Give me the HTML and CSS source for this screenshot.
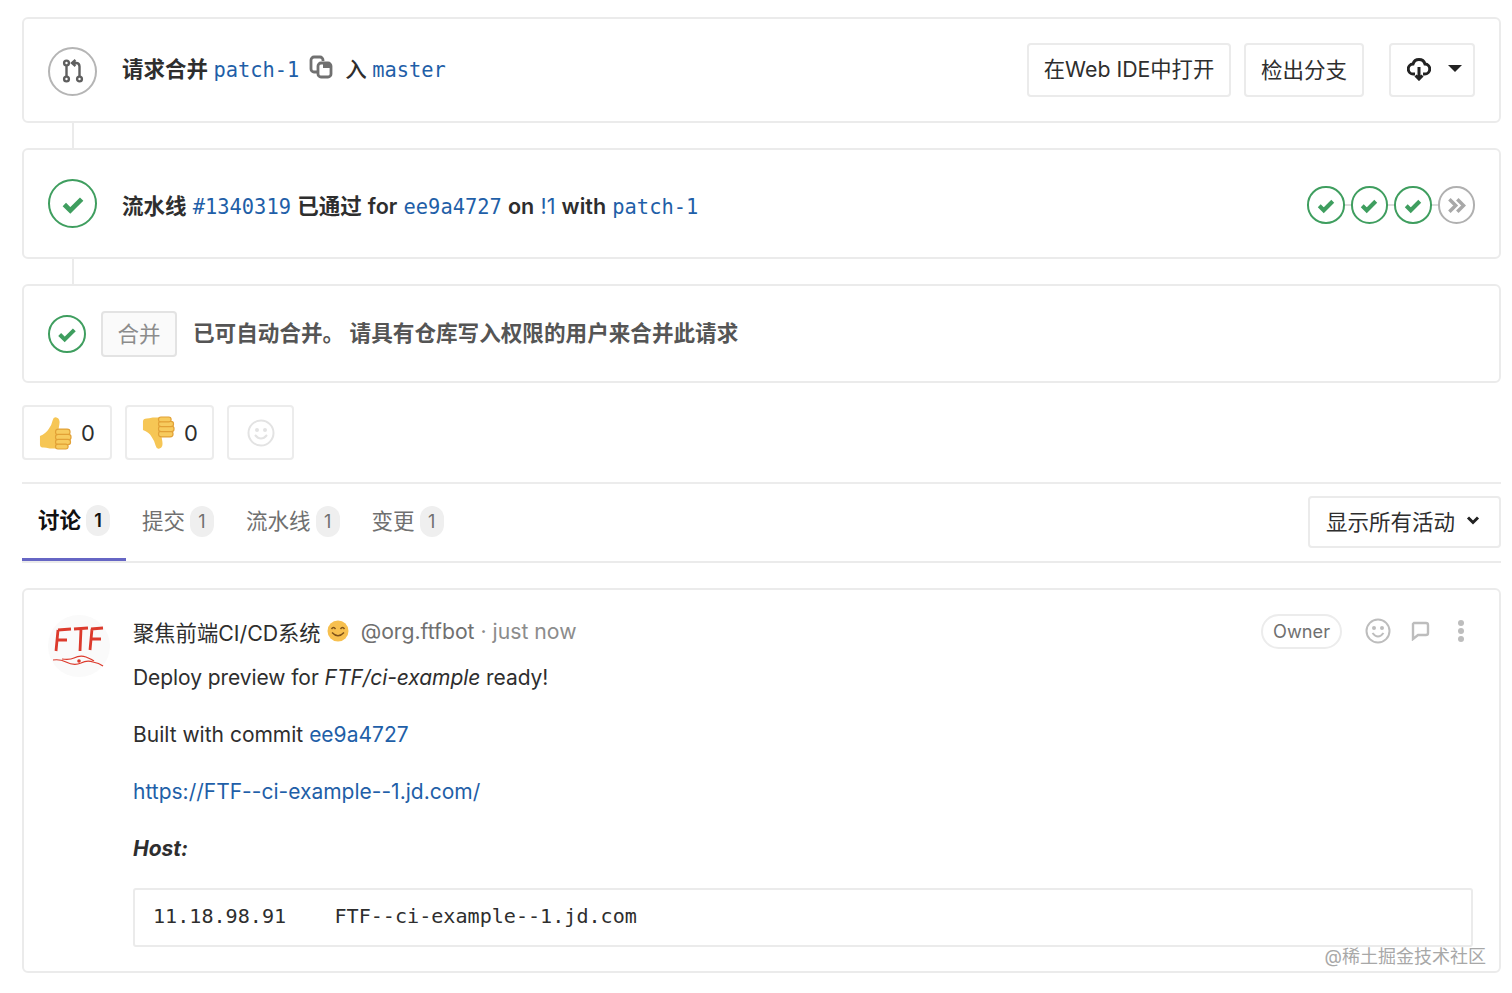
FILE: index.html
```html
<!DOCTYPE html>
<html>
<head>
    <meta charset="UTF-8">
    <title>合并请求</title>
    <link rel="stylesheet" href="styles.css">
</head>
<body>
    <svg class="defs" width="0" height="0">
        <symbol id="thumb" viewBox="0 0 34 34">
            <path d="M1 20q6-2 9-7 3-4 4-9 1-4 4-3 4 1 3 7l-1 6v19H11q-4-1-6-1-4 0-4-3z" fill="#f6c655"/>
            <g fill="#f7cb5e" stroke="#e2a136" stroke-width="1.200">
                <rect x="17" y="13" width="15" height="6" rx="3"/>
                <rect x="17" y="18.500" width="16" height="5.500" rx="2.700"/>
                <rect x="17" y="23.500" width="15.500" height="5.500" rx="2.700"/>
                <rect x="17" y="28.500" width="13" height="5" rx="2.500"/>
            </g>
        </symbol>
    </svg>
    <section class="card card-branch">
        <span class="status status-grey">
            <svg width="24" height="24" viewBox="0 0 24 24" fill="none" stroke="#5f5f5f" stroke-width="2.400">
                <circle cx="5.500" cy="20" r="2.400"/><circle cx="18.500" cy="20" r="2.400"/><circle cx="5.500" cy="4" r="2.400"/>
                <path d="M5.500 6.500v11M18.500 17.500V7.500q0-3.500-3.500-3.500h-3"/><path d="M14.500 1l-3.500 3 3.500 3"/>
            </svg>
        </span>
        <p class="title title-branch">请求合并 <a class="mono">patch-1</a>
            <svg class="copy" width="24" height="24" viewBox="0 0 24 24" fill="none" stroke="#707070" stroke-width="2.800">
                <path d="M8 17H5a3 3 0 0 1-3-3V5a3 3 0 0 1 3-3h6a3 3 0 0 1 3 3v1"/>
                <rect x="9" y="8" width="13" height="14" rx="3"/><rect x="14" y="9" width="7" height="4" fill="#707070" stroke="none"/>
            </svg>
            <span class="into">入</span> <a class="mono">master</a></p>
        <div class="actions">
            <span class="btn btn-ide">在Web IDE中打开</span>
            <span class="btn btn-checkout">检出分支</span>
            <span class="btn btn-download">
                <svg width="24" height="24" viewBox="0 0 24 24" fill="none" stroke="#222" stroke-width="3">
                    <path d="M8 17H6.500a5 5 0 0 1-.5-10 6.300 6.300 0 0 1 12 0 5 5 0 0 1-.5 10H16"/>
                    <path d="M12 10v12M8.500 18.500l3.500 3.500 3.500-3.500"/>
                </svg>
                <i class="caret"></i>
            </span>
        </div>
    </section>
    <div class="link-line"></div>
    <section class="card card-pipeline">
        <span class="status status-green">
            <svg width="26" height="26" viewBox="0 0 24 24" fill="none" stroke="#3f9e5f" stroke-width="4.400"><path d="M4 12.500l5.500 5.500L20 7.500"/></svg>
        </span>
        <p class="title title-pipeline">流水线 <a class="mono">#1340319</a> 已通过 for <a class="mono">ee9a4727</a> on <a class="plain">!1</a> with <a class="mono">patch-1</a></p>
        <div class="stages">
            <span class="stage"><svg width="18" height="18" viewBox="0 0 24 24" fill="none" stroke="#3f9e5f" stroke-width="5.500"><path d="M3 13l6 6L21 7"/></svg></span>
            <span class="stage-line"></span>
            <span class="stage"><svg width="18" height="18" viewBox="0 0 24 24" fill="none" stroke="#3f9e5f" stroke-width="5.500"><path d="M3 13l6 6L21 7"/></svg></span>
            <span class="stage-line"></span>
            <span class="stage"><svg width="18" height="18" viewBox="0 0 24 24" fill="none" stroke="#3f9e5f" stroke-width="5.500"><path d="M3 13l6 6L21 7"/></svg></span>
            <span class="stage-line"></span>
            <span class="stage stage-skip"><svg width="19" height="19" viewBox="0 0 24 24" fill="none" stroke="#a8a8a8" stroke-width="4.400"><path d="M3 4l8 8-8 8M13 4l8 8-8 8"/></svg></span>
        </div>
    </section>
    <div class="link-line"></div>
    <section class="card card-merge">
        <span class="status status-green status-small">
            <svg width="22" height="22" viewBox="0 0 24 24" fill="none" stroke="#3f9e5f" stroke-width="4.400"><path d="M4 12.500l5.500 5.500L20 7.500"/></svg>
        </span>
        <span class="btn-merge">合并</span>
        <p class="merge-text">已可自动合并。 请具有仓库写入权限的用户来合并此请求</p>
    </section>

    <div class="awards">
        <span class="award award-up">
            <svg width="33" height="34"><use href="#thumb"/></svg>
            0
        </span>
        <span class="award award-down">
            <svg class="flip" width="33" height="34"><use href="#thumb"/></svg>
            0
        </span>
        <span class="award award-empty">
            <svg width="28" height="28" viewBox="0 0 28 28" fill="none" stroke="#e3e3e3" stroke-width="2">
                <circle cx="14" cy="14" r="12.500"/><path d="M8 16q6 7 12 0"/><circle cx="10" cy="11" r="1" fill="#e3e3e3"/><circle cx="18" cy="11" r="1" fill="#e3e3e3"/>
            </svg>
        </span>
    </div>

    <nav class="tabs">
        <ul class="tab-list">
            <li class="tab tab-active"><span class="tab-label">讨论</span> <span class="badge">1</span></li>
            <li class="tab"><span class="tab-label">提交</span> <span class="badge">1</span></li>
            <li class="tab"><span class="tab-label">流水线</span> <span class="badge">1</span></li>
            <li class="tab"><span class="tab-label">变更</span> <span class="badge">1</span></li>
        </ul>
        <span class="btn btn-filter">显示所有活动
            <svg width="14" height="14" viewBox="0 0 14 14" fill="none" stroke="#222" stroke-width="3"><path d="M2 4.500l5 5 5-5"/></svg>
        </span>
    </nav>

    <article class="card note">
        <svg class="avatar" width="62" height="62" viewBox="0 0 62 62">
            <circle cx="31" cy="31" r="31" fill="#fafafa"/>
            <g fill="none" stroke="#dc3a2c" stroke-width="2.800">
                <path d="M10 15l13-1M10 15l-2 21M9 25h10"/>
                <path d="M26 14l14-1M33 14l-1 22"/>
                <path d="M43 14l12-1M44 14l-2 21M43 24h10"/>
            </g>
            <g fill="none" stroke="#dc3a2c" stroke-width="1.200">
                <path d="M5 45q7-1 13 2 8 4 15 1 6-3 12-1 6 1 10 4"/>
                <path d="M14 44q8 1 12-1 6-3 12-1 5 2 8 4"/>
            </g>
            <circle cx="31" cy="46" r="1.800" fill="#dc3a2c"/>
        </svg>
        <div class="note-body">
            <header class="note-head">
                <span class="author">聚焦前端CI/CD系统</span>
                <svg class="smile" width="22" height="22" viewBox="0 0 22 22">
                    <circle cx="11" cy="11" r="10.500" fill="#f7c04f"/>
                    <path d="M4.500 9q2-3 4 0M13.500 9q2-3 4 0M5 12.500q6 6.500 12 0" fill="none" stroke="#7d5119" stroke-width="1.400"/>
                </svg>
                <span class="handle">@org.ftfbot</span>
                <span class="time">· just now</span>
                <div class="note-actions">
                    <span class="role">Owner</span>
                    <svg class="act-smile" width="26" height="26" viewBox="0 0 26 26" fill="none" stroke="#bdbdbd" stroke-width="2">
                        <circle cx="13" cy="13" r="11.500"/><path d="M7.500 15q5.500 7 11 0"/><circle cx="9" cy="10" r="1" fill="#bdbdbd"/><circle cx="17" cy="10" r="1" fill="#bdbdbd"/>
                    </svg>
                    <svg class="act-comment" width="20" height="20" viewBox="0 0 20 20" fill="none" stroke="#bdbdbd" stroke-width="2.400"><path d="M4 2h12q2 0 2 2v8q0 2-2 2H8l-5 4V3z"/></svg>
                    <span class="dots"><i></i><i></i><i></i></span>
                </div>
            </header>
            <p class="note-line note-first">Deploy preview for <em>FTF/ci-example</em> ready!</p>
            <p class="note-line">Built with commit <a>ee9a4727</a></p>
            <p class="note-line"><a>https://FTF--ci-example--1.jd.com/</a></p>
            <p class="note-line"><strong><em>Host:</em></strong></p>
            <pre class="code">11.18.98.91    FTF--ci-example--1.jd.com</pre>
        </div>
        <span class="watermark">@稀土掘金技术社区</span>
    </article>
</body>
</html>
```

FILE: styles.css
```css
*{
    margin: 0;
    padding: 0;
    box-sizing: border-box;
}
ul,li{
    list-style: none;
}
body{
    padding: 17px 11px 0 22px;
    height: 993px;
    overflow: hidden;
    background: #fff;
    color: #2e2e2e;
    font-family: Inter, "Noto Sans CJK SC", sans-serif;
    font-size: 21.5px;
}
a{
    color: #1f5fa8;
    text-decoration: none;
}
.defs{
    position: absolute;
}
.mono{
    font-family: "DejaVu Sans Mono", "Noto Sans CJK SC", monospace;
    font-size: 20.4px;
    font-weight: 400;
}
.plain{
    font-weight: 400;
}
.card{
    border: 2px solid #ebebeb;
    border-radius: 6px;
    background: #fff;
}
.card-branch,.card-pipeline{
    display: flex;
    align-items: center;
    padding-left: 24px;
    padding-right: 24px;
}
.card-branch{
    height: 106px;
}
.card-pipeline{
    height: 111px;
}
.link-line{
    width: 2px;
    height: 25px;
    margin-left: 50px;
    background: #ebebeb;
}
.status{
    flex: none;
    display: flex;
    align-items: center;
    justify-content: center;
    width: 49px;
    height: 49px;
    border-radius: 50%;
    border: 2px solid #3f9e5f;
}
.status-grey{
    border-color: #b5b5b5;
    margin-top: 2px;
}
.status-small{
    width: 38px;
    height: 38px;
    border-width: 2.500px;
}
.title{
    margin-left: 25px;
    font-weight: 600;
    font-size: 21.5px;
    white-space: nowrap;
    color: #2e2e2e;
}
.title-branch{
    padding-bottom: 5px;
}
.title-pipeline{
    padding-top: 1px;
    word-spacing: .8px;
}
.copy{
    vertical-align: -2px;
    margin: 0 7px 0 4px;
}
.into{
    font-weight: 500;
}
.actions{
    margin-left: auto;
    display: flex;
    align-items: center;
    gap: 13px;
}
.btn{
    display: inline-flex;
    align-items: center;
    justify-content: center;
    height: 54px;
    padding: 0 15px;
    border: 2px solid #ebebeb;
    border-radius: 4px;
    background: #fff;
    color: #2e2e2e;
    font-size: 21.5px;
    white-space: nowrap;
}
.btn-ide{
    width: 204px;
    padding-bottom: 6px;
    font-size: 21.3px;
}
.btn-checkout{
    width: 120px;
    padding-bottom: 3px;
}
.btn-download{
    margin-left: 12px;
    width: 86px;
    gap: 17px;
    padding: 0 0 3px 16px;
    justify-content: flex-start;
}
.caret{
    width: 0;
    height: 0;
    border-left: 7px solid transparent;
    border-right: 7px solid transparent;
    border-top: 7px solid #222;
}
.stages{
    margin-left: auto;
    margin-top: 3px;
    display: flex;
    align-items: center;
}
.stage{
    width: 37.500px;
    height: 37.500px;
    border-radius: 50%;
    border: 2px solid #3f9e5f;
    display: flex;
    align-items: center;
    justify-content: center;
}
.stage-skip{
    border-color: #b0b0b0;
}
.stage-line{
    width: 6px;
    height: 2px;
    background: #dcdcdc;
}
.card-merge{
    height: 99px;
    display: flex;
    align-items: center;
    padding-left: 24px;
}
.btn-merge{
    margin-left: 15px;
    width: 76px;
    height: 46px;
    padding-bottom: 3px;
    display: flex;
    align-items: center;
    justify-content: center;
    background: #fafafa;
    border: 2px solid #e3e3e3;
    border-radius: 4px;
    color: #8c8c8c;
    font-size: 21.5px;
}
.merge-text{
    margin-left: 16px;
    padding-bottom: 5px;
    font-weight: 600;
    font-size: 21.6px;
    color: #555;
    white-space: nowrap;
}
.awards{
    display: flex;
    gap: 13px;
    margin-top: 22px;
}
.award{
    display: flex;
    align-items: center;
    gap: 9px;
    height: 55px;
    padding-left: 15px;
    border: 2px solid #ececec;
    border-radius: 4px;
    font-size: 22px;
    color: #2e2e2e;
}
.award-up{
    width: 90px;
}
.award-down{
    width: 89px;
}
.flip{
    transform: scaleY(-1);
}
.award-empty{
    width: 67px;
    justify-content: center;
    padding: 0;
}
.tabs{
    margin-top: 22px;
    height: 81px;
    display: flex;
    align-items: center;
    justify-content: space-between;
    border-top: 2px solid #ececec;
    border-bottom: 2px solid #ebebeb;
}
.tab-list{
    display: flex;
    height: 79px;
}
.tab{
    display: flex;
    align-items: center;
    gap: 5px;
    padding: 0 16px 3px;
    font-size: 21.5px;
    color: #707070;
    white-space: nowrap;
}
.tab-label{
    padding-bottom: 3px;
}
.tab-active{
    color: #111;
    font-weight: 700;
    border-bottom: 3px solid #6666c4;
    height: 78px;
    padding-bottom: 1px;
}
.badge{
    width: 24px;
    height: 31px;
    border-radius: 12px;
    background: #efefef;
    display: flex;
    align-items: center;
    justify-content: center;
    font-size: 18px;
    font-weight: 400;
    color: #707070;
}
.tab-active .badge{
    color: #111;
    font-weight: 600;
}
.btn-filter{
    height: 52px;
    width: 193px;
    gap: 11px;
    padding: 0 3px 3px 0;
    margin-top: -2px;
}
.note{
    position: relative;
    margin-top: 25px;
    height: 385px;
    display: flex;
    padding: 25px 26px 0 24px;
}
.avatar{
    flex: none;
}
.note-body{
    flex: 1;
    margin-left: 23px;
    min-width: 0;
}
.note-head{
    display: flex;
    align-items: center;
    height: 36px;
    margin: -2px 0 4px;
}
.author{
    color: #2e2e2e;
    font-size: 21.300px;
}
.smile{
    margin-left: 6px;
}
.handle{
    margin-left: 12px;
    color: #707070;
    font-size: 21.200px;
}
.time{
    margin-left: 6px;
    color: #8c8c8c;
    font-size: 21.200px;
}
.note-actions{
    margin-left: auto;
    display: flex;
    align-items: center;
}
.role{
    height: 35px;
    padding: 0 10px;
    display: flex;
    align-items: center;
    border: 2px solid #ececec;
    border-radius: 18px;
    color: #707070;
    font-size: 18.200px;
    margin-right: 23px;
}
.act-comment{
    margin-left: 19px;
}
.dots{
    display: flex;
    flex-direction: column;
    gap: 2px;
    margin: 0 9px 0 28px;
}
.dots i{
    display: block;
    width: 6px;
    height: 6px;
    border-radius: 50%;
    background: #bdbdbd;
}
.note-line{
    height: 57px;
    line-height: 50px;
    font-size: 21px;
    color: #2e2e2e;
}
.note-first{
    letter-spacing: -.07px;
}
.code{
    margin-top: 7px;
    height: 59px;
    padding: 0 18px;
    line-height: 52px;
    border: 2px solid #ebebeb;
    border-radius: 3px;
    font-family: "DejaVu Sans Mono", monospace;
    font-size: 20.100px;
    color: #2e2e2e;
}
.watermark{
    position: absolute;
    right: 13px;
    bottom: 3px;
    color: #a8a8a8;
    font-size: 18px;
    white-space: nowrap;
}
```
